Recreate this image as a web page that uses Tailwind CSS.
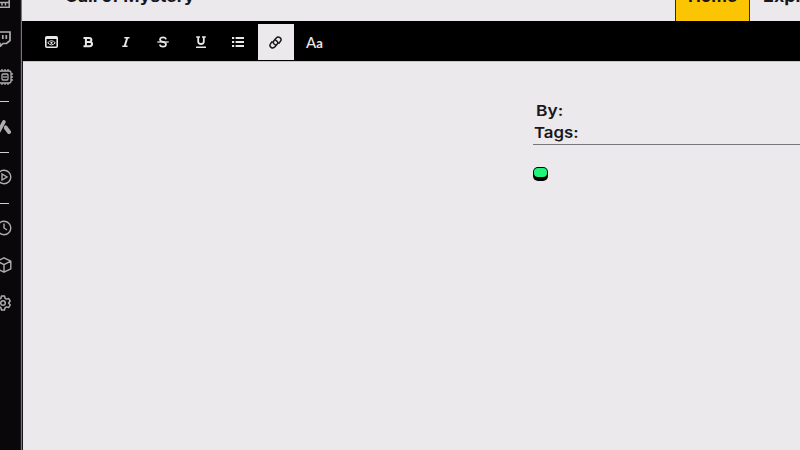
<!DOCTYPE html>
<html lang="en">
<head>
<meta charset="utf-8">
<title>Call of Mystery</title>
<script src="https://cdn.jsdelivr.net/npm/@tailwindcss/browser@4"></script>
</head>
<body class="flex h-[450px] w-[800px] overflow-hidden bg-[#ebe9eb] font-['Inter','Liberation_Sans',sans-serif] text-[#19171b]">
<aside class="flex w-[20px] shrink-0 flex-col overflow-hidden bg-[#09070a] text-[#b0adb0]">
  <div class="flex h-[20px] shrink-0 items-start"><svg class="-mt-[7px] -ml-[6px] h-4 w-4 shrink-0" viewBox="0 0 16 16" fill="none" stroke="currentColor" stroke-width="1.500"><path d="M1 0v14.200h14.200V0M1 9.500h14M8 10v2.500M11.500 10v2.500"/></svg></div>
  <div class="flex h-[37px] shrink-0 items-center"><svg class="-ml-[5px] h-4 w-4 shrink-0" viewBox="0 0 16 16" fill="none" stroke="currentColor" stroke-width="1.700"><path d="M2 1h13v8.500l-3.500 3H8l-3 3v-3H1V3zM7.800 4v4M11.300 4v4"/></svg></div>
  <div class="flex h-[39px] shrink-0 items-center"><svg class="-ml-[3px] h-4 w-4 shrink-0" viewBox="0 0 16 16" fill="none" stroke="currentColor" stroke-width="1.300"><rect x="2" y="2" width="12" height="12" rx="2"/><rect x="5" y="5" width="6" height="6" rx="1"/><path d="M7 7v2M9 7v2M5 0v2M8 0v2M11 0v2M5 14v2M8 14v2M11 14v2M14 5h2M14 8h2M14 11h2"/></svg></div>
  <div class="flex h-[10px] shrink-0 items-center"><div class="h-px w-[9px] bg-[#d0ced0]"></div></div>
  <div class="flex h-[42px] shrink-0 items-center"><svg class="-ml-[5px] h-4 w-4 shrink-0" viewBox="0 0 16 16" fill="none" stroke="currentColor" stroke-width="3.600" stroke-linecap="round"><path d="M3.500 13 8.900 2.800"/><path d="M10.600 7.800 11.200 8.800" stroke-width="3"/><path d="m11 9 3 4" stroke-width="4"/></svg></div>
  <div class="flex h-[8px] shrink-0 items-center"><div class="h-px w-[9px] bg-[#d0ced0]"></div></div>
  <div class="flex h-[42px] shrink-0 items-center"><svg class="-ml-1 h-4 w-4 shrink-0" viewBox="0 0 16 16" fill="none" stroke="currentColor" stroke-width="1.400"><circle cx="8" cy="8" r="6.800"/><path d="M6 5v6l5-3z"/></svg></div>
  <div class="flex h-[10px] shrink-0 items-center"><div class="h-px w-[9px] bg-[#d0ced0]"></div></div>
  <div class="flex h-[40px] shrink-0 items-center"><svg class="-ml-1 h-4 w-4 shrink-0" viewBox="0 0 16 16" fill="none" stroke="currentColor" stroke-width="1.400"><circle cx="8" cy="8" r="6.800"/><path d="M8 3.500V8l3 2"/></svg></div>
  <div class="flex h-[34px] shrink-0 items-center"><svg class="-ml-1 h-4 w-4 shrink-0" viewBox="0 0 16 16" fill="none" stroke="currentColor" stroke-width="1.400" stroke-linejoin="round"><path d="m8 .8 6.800 3.400v7.600L8 15.200l-6.800-3.400V4.200zM1.200 4.200 8 7.600l6.800-3.400M8 7.600v7.600"/></svg></div>
  <div class="flex h-[42px] shrink-0 items-center"><svg class="-ml-[5px] h-4 w-4 shrink-0" viewBox="0 0 16 16" fill="none" stroke="currentColor" stroke-width="1.500" stroke-linejoin="round"><path d="M6.500 1h3l.6 2.300 1.400.8 2.200-.6 1.500 2.600L13.600 8l1.600 1.900-1.500 2.600-2.200-.6-1.400.8L9.500 15h-3l-.6-2.300-1.400-.8-2.200.6-1.500-2.600L2.400 8 .8 6.100l1.500-2.600 2.200.6 1.400-.8z"/><circle cx="8" cy="8" r="2.300"/></svg></div>
</aside>
<div class="w-[3px] shrink-0 border-x border-l-[#1b191c] border-r-[#19171b] bg-[#77757a]"></div>
<div class="flex min-w-0 flex-1 flex-col">
  <header class="-ml-px flex h-[21px] shrink-0 overflow-hidden bg-[#ebe9eb] pl-[43px]">
    <h1 class="-mt-[14px] h-5 w-[609.500px] shrink-0 text-[16px] leading-5 font-bold whitespace-nowrap"><span class="inline-block origin-left scale-x-[1.090]">Call of Mystery</span></h1>
    <nav class="flex h-[21px] text-[16px] leading-5 font-bold">
      <a class="flex w-[75.500px] items-start border-x border-[#3a3008] bg-[#fcc504] pl-[12.500px]"><span class="-mt-[14px] block origin-left scale-x-[1.070]">Home</span></a>
      <a class="flex items-start pl-[13px]"><span class="-mt-[14px] block origin-left scale-x-[1.120]">Explore</span></a>
    </nav>
  </header>
  <div class="-ml-px flex h-[40px] shrink-0 bg-black pt-[3px] pl-[10px] text-[#e8e6e8]">
    <div class="flex h-[36px] w-[37.500px] items-center justify-center pl-px"><svg class="h-3 w-[13px]" viewBox="0 0 13 12"><rect x=".8" y=".8" width="11.400" height="10.400" rx="1" fill="none" stroke="currentColor" stroke-width="1.600"/><path d="M1 1h11v2H1z" fill="currentColor"/><path d="M2.700 6.800q3.800-4.200 7.600 0-3.800 4.200-7.600 0z" fill="none" stroke="currentColor"/><circle cx="6.500" cy="6.800" r="1.100" fill="currentColor"/></svg></div>
    <div class="flex h-[36px] w-[37.500px] items-center justify-center"><svg class="h-3 w-3" viewBox="0 0 12 12" fill="none" stroke="currentColor" stroke-width="2"><path d="M1.500 2H7q2.400 0 2.400 2T7 6H4M1.500 10.200h6q2.600 0 2.600-2.100T7.500 6M3.900 2v8"/></svg></div>
    <div class="flex h-[36px] w-[37.500px] items-center justify-center"><svg class="h-3 w-3" viewBox="0 0 12 12" fill="none" stroke="currentColor" stroke-width="1.500"><path d="M4.300 1.800h5.200M2.300 10.200h5.200"/><path d="M7.200 2 4.700 10" stroke-width="2"/></svg></div>
    <div class="flex h-[36px] w-[37.500px] items-center justify-center"><svg class="h-3 w-3" viewBox="0 0 12 12" fill="none" stroke="currentColor" stroke-width="1.700"><path d="M9 3.300Q8.600 1.300 6 1.300T3 3.400Q3 5 6 5.900t3 2.600q0 2.200-3 2.200T2.900 8.500"/><path d="M.3 6h11.400" stroke-width="1.300"/></svg></div>
    <div class="flex h-[36px] w-[37.500px] items-center justify-center"><svg class="h-3 w-3" viewBox="0 0 12 12" fill="none" stroke="currentColor" stroke-width="1.500"><path d="M1.200 1h3.800M7 1h3.800M1 11.200h10"/><path d="M3.200 1v4.500Q3.200 8 6 8t2.800-2.500V1" stroke-width="1.800"/></svg></div>
    <div class="flex h-[36px] w-[38.500px] items-center justify-center pr-px"><svg class="h-3 w-3" viewBox="0 0 12 12" fill="none" stroke="currentColor" stroke-width="1.900"><path d="M0 2h2.200M0 6h2.200M0 10h2.200M3.600 2H12M3.600 6H12M3.600 10H12"/></svg></div>
    <div class="flex h-[36px] w-[36px] items-center justify-center bg-[#ebe9eb] pr-px text-[#19171b]"><svg class="h-[13px] w-[13px]" viewBox="0 0 12 12" fill="none" stroke="currentColor" stroke-width="1.400" stroke-linecap="round"><path d="M5.600 8Q3.100 6.600 4.400 4.600L6.500 2Q8.200.2 10.100 1.600T10.500 5L9.200 6.700M6.400 4Q8.900 5.400 7.600 7.400L5.500 10Q3.800 11.800 1.900 10.400T1.500 7L2.800 5.300"/></svg></div>
    <div class="flex h-[36px] w-[41px] items-center justify-center pt-px"><span class="font-['Lato',sans-serif] text-[15px] leading-4 font-medium">A<span class="text-[13px] font-bold">a</span></span></div>
  </div>
  <main class="flex-1 border-t border-[#c6c4c7]">
    <section class="ml-[510px] pt-[38px] text-[15px] leading-[22px] font-semibold">
      <p class="pl-[3px]"><span class="inline-block origin-left scale-x-[1.160]">By:</span></p>
      <p class="h-[23px] border-b border-[#77747a] pl-px"><span class="inline-block origin-left scale-x-[1.120]">Tags:</span></p>
      <div class="mt-[22px] h-[14px] w-[15px] rounded-[5px] bg-black p-px"><div class="h-[9px] rounded-[4px] bg-[#20f578]"></div></div>
    </section>
  </main>
</div>
</body>
</html>
